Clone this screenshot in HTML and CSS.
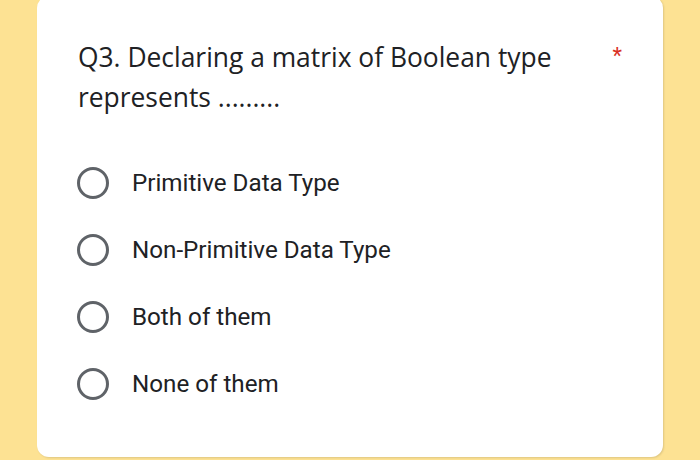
FILE: index.html
```html
<!DOCTYPE html>
<html>
<head>
<meta charset="utf-8">
<link rel="stylesheet" href="styles.css">
</head>
<body>
<div class="card">
  <div class="head">
    <div class="title">Q3. Declaring a matrix of Boolean type represents .........</div>
    <div class="star">*</div>
  </div>
  <div class="options">
    <div class="opt"><span class="radio"></span><span class="label">Primitive Data Type</span></div>
    <div class="opt"><span class="radio"></span><span class="label">Non-Primitive Data Type</span></div>
    <div class="opt"><span class="radio"></span><span class="label">Both of them</span></div>
    <div class="opt"><span class="radio"></span><span class="label">None of them</span></div>
  </div>
</div>
</body>
</html>
```
FILE: styles.css
```css
html, body { margin: 0; padding: 0; }
body {
  width: 700px;
  height: 460px;
  background: #fde293;
  overflow: hidden;
  font-family: Roboto, "Liberation Sans", sans-serif;
}
.card {
  margin: -4px 0 0 37px;
  width: 626px;
  height: 461px;
  box-sizing: border-box;
  background: #fff;
  border-radius: 12px;
  box-shadow: 1px 1px 2px rgba(0,0,0,0.12);
  padding: 41px 40px 0 40px;
}
.head {
  display: flex;
  justify-content: space-between;
}
.title {
  width: 500px;
  padding-left: 1px;
  font-family: "Open Sans", Roboto, sans-serif;
  font-size: 26.4px;
  line-height: 40px;
  color: #202124;
}
.star {
  color: #d93025;
  font-size: 22px;
  line-height: 30px;
  margin-top: 4px;
  margin-right: 1px;
}
.options {
  margin-top: 49px;
  display: flex;
  flex-direction: column;
  gap: 33px;
}
.opt {
  display: flex;
  align-items: center;
  height: 34px;
}
.radio {
  width: 26px;
  height: 26px;
  border: 3px solid #5f6368;
  border-radius: 50%;
  flex: none;
}
.label {
  margin-left: 23px;
  font-size: 24.2px;
  color: #202124;
}
```
